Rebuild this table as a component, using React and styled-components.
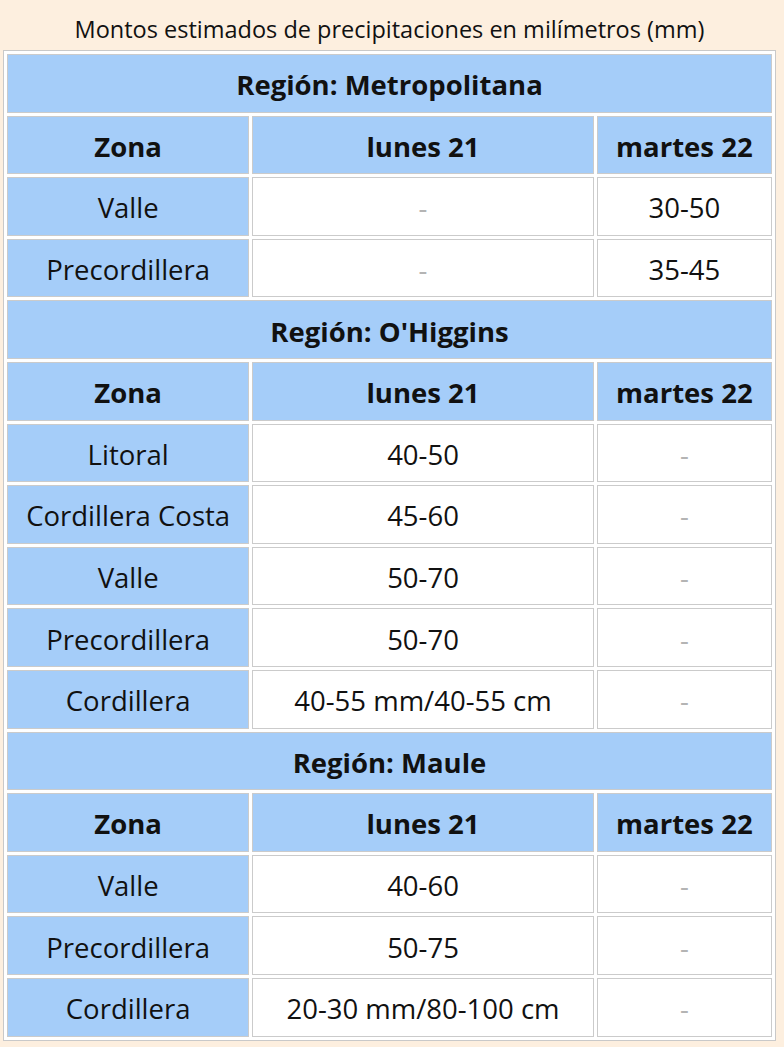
import styled, { createGlobalStyle } from 'styled-components'

const GlobalStyle = createGlobalStyle`
  html, body {
    margin: 0;
    padding: 0;
    background: #fdefdf;
  }
  body {
    font-family: "Open Sans", Lato, sans-serif;
    color: #111;
  }
`

const Page = styled.div`
  padding: 0 0 0 3px;
`

const Table = styled.table`
  width: 773px;
  table-layout: fixed;
  border-collapse: separate;
  border-spacing: 3px;
  background: #fff;
  border: 1px solid #c9c9c9;
  font-size: 27.5px;
`

const Caption = styled.caption`
  background: #fdefdf;
  padding: 14px 0 5px;
  font-size: 23.5px;
  line-height: 31px;
  color: #111;
`

const Cell = styled.td`
  box-sizing: border-box;
  height: 58.6px;
  padding: 4px 2px 0;
  border: 1px solid #cbcbcb;
  text-align: center;
  vertical-align: middle;
  line-height: 32px;
  background: ${(p) => (p.$blue ? '#a5cdf9' : '#fff')};
  font-weight: ${(p) => (p.$bold ? 700 : 400)};
  color: ${(p) => (p.$muted ? '#b4b4b4' : '#111')};
  white-space: nowrap;
`

const regions = [
  {
    name: 'Metropolitana',
    rows: [
      ['Valle', '-', '30-50'],
      ['Precordillera', '-', '35-45'],
    ],
  },
  {
    name: "O'Higgins",
    rows: [
      ['Litoral', '40-50', '-'],
      ['Cordillera Costa', '45-60', '-'],
      ['Valle', '50-70', '-'],
      ['Precordillera', '50-70', '-'],
      ['Cordillera', '40-55 mm/40-55 cm', '-'],
    ],
  },
  {
    name: 'Maule',
    rows: [
      ['Valle', '40-60', '-'],
      ['Precordillera', '50-75', '-'],
      ['Cordillera', '20-30 mm/80-100 cm', '-'],
    ],
  },
]

function Value({ v }) {
  return v === '-' ? <Cell $muted>-</Cell> : <Cell>{v}</Cell>
}

export default function App() {
  return (
    <Page>
      <GlobalStyle />
      <Table>
        <Caption>Montos estimados de precipitaciones en milímetros (mm)</Caption>
        <colgroup>
          <col style={{ width: 242 }} />
          <col style={{ width: 341 }} />
          <col style={{ width: 175 }} />
        </colgroup>
        <tbody>
          {regions.map((r) => [
            <tr key={r.name + '-h'}>
              <Cell as="th" colSpan={3} $blue $bold>
                Región: {r.name}
              </Cell>
            </tr>,
            <tr key={r.name + '-z'}>
              <Cell as="th" $blue $bold>Zona</Cell>
              <Cell as="th" $blue $bold>lunes 21</Cell>
              <Cell as="th" $blue $bold>martes 22</Cell>
            </tr>,
            ...r.rows.map((row, i) => (
              <tr key={r.name + i}>
                <Cell $blue>{row[0]}</Cell>
                <Value v={row[1]} />
                <Value v={row[2]} />
              </tr>
            )),
          ])}
        </tbody>
      </Table>
    </Page>
  )
}
